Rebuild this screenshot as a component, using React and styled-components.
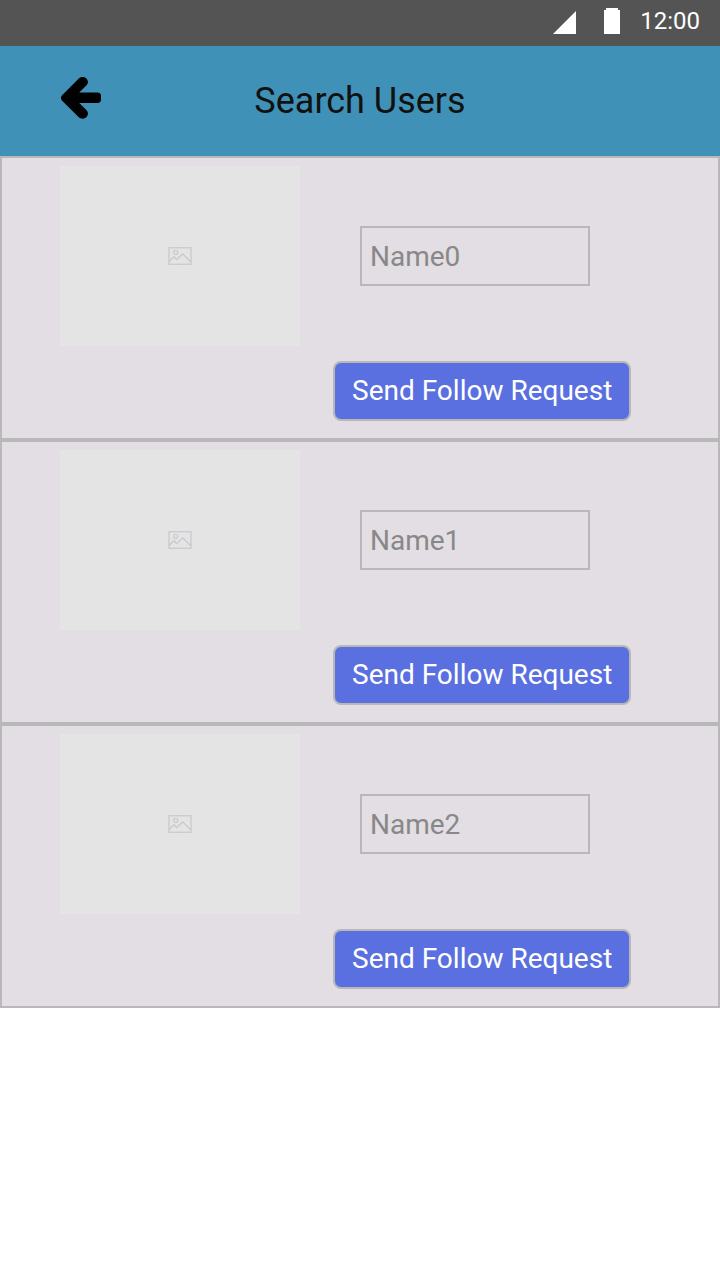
import React from "react";
import styled, { createGlobalStyle } from "styled-components";

const GlobalStyle = createGlobalStyle`
  *, *::before, *::after { box-sizing: border-box; }
  body {
    margin: 0;
    background: #ffffff;
    font-family: Roboto, "Liberation Sans", sans-serif;
  }
  button, input { font: inherit; }
`;

const StatusBar = styled.div`
  display: flex;
  align-items: center;
  justify-content: flex-end;
  height: 46px;
  padding: 0 20px 4px;
  background: #545454;
  color: #ffffff;
  font-size: 24px;
  line-height: 28px;
`;

const StatusIcons = styled.svg`
  display: block;
  width: 68px;
  height: 28px;
  margin-right: 19px;
`;

const Header = styled.header`
  display: grid;
  grid-template-columns: 40px 1fr 40px;
  align-items: center;
  height: 110px;
  padding: 0 60px;
  background: #4091b7;
`;

const BackButton = styled.button`
  display: block;
  width: 42px;
  height: 44px;
  margin-bottom: 6px;
  padding: 0;
  border: 0;
  background: none;
  cursor: pointer;

  svg { display: block; }
`;

const Title = styled.h1`
  margin: 0;
  color: #111111;
  font-size: 36px;
  font-weight: 400;
  line-height: 44px;
  text-align: center;
`;

const UserList = styled.ul`
  margin: 0;
  padding: 0;
  list-style: none;
`;

const UserCard = styled.li`
  display: flex;
  align-items: flex-start;
  padding: 8px 58px 17px;
  border: 2px solid #b8b8b8;
  background: #e2dee3;
`;

const Picture = styled.div`
  display: flex;
  flex: none;
  align-items: center;
  justify-content: center;
  width: 240px;
  height: 180px;
  background: #e4e4e4;
`;

const Details = styled.div`
  display: flex;
  flex: 1;
  flex-direction: column;
  align-items: flex-start;
  gap: 75px;
  padding: 60px 0 0 33px;
`;

const NameInput = styled.input`
  width: 230px;
  height: 60px;
  margin-left: 27px;
  padding: 0 8px;
  border: 2px solid #b8b8b8;
  border-radius: 0;
  background: transparent;
  color: #888888;
  font-size: 28px;
  outline: none;

  &::placeholder { color: #888888; opacity: 1; }
`;

const FollowButton = styled.button`
  height: 60px;
  padding: 0 17px;
  border: 2px solid #b8b8b8;
  border-radius: 8px;
  background: #5a70e0;
  color: #ffffff;
  font-size: 28px;
  line-height: 32px;
  white-space: nowrap;
  cursor: pointer;
`;

const users = ["Name0", "Name1", "Name2"];

function PictureIcon() {
  return (
    <svg width="24" height="18" viewBox="0 0 24 18" fill="none" stroke="#c6c8cc" aria-hidden="true">
      <rect x="1" y="0.75" width="22" height="16.5" strokeWidth="1.2" />
      <circle cx="7.7" cy="5.3" r="2" strokeWidth="1.1" />
      <path d="M1 14.5 6 9.7 8.6 12.6 14.8 6.8 23 15" strokeWidth="1.2" />
    </svg>
  );
}

export default function App() {
  return (
    <>
      <GlobalStyle />
      <StatusBar>
        <StatusIcons viewBox="0 0 68 28" fill="#ffffff" aria-hidden="true">
          <path d="M0 27 23 4V27Z" />
          <path d="M53 1H65V3H67V27H51V3H53Z" />
        </StatusIcons>
        <span>12:00</span>
      </StatusBar>
      <Header>
        <BackButton type="button" aria-label="Back">
          <svg width="42" height="44" viewBox="0 0 42 44" aria-hidden="true">
            <path d="M1.9 19.4 18.3 3C20.8.4 24.1.5 26.3 2.4C28.6 4.4 28.5 7.4 26.3 9.6L19.2 16.6H37.4C40 16.6 41 17.9 41 20.2V23.6C41 25.9 40 27 37.4 27H19.2L26.3 34C28.5 36.3 28.6 39.2 26.3 41.3C24.1 43.3 20.8 43.2 18.3 40.7L1.9 24.4C.6 23 .6 20.8 1.9 19.4Z" />
          </svg>
        </BackButton>
        <Title>Search Users</Title>
      </Header>
      <main>
        <UserList>
          {users.map((name) => (
            <UserCard key={name}>
              <Picture role="img" aria-label={`${name} picture`}>
                <PictureIcon />
              </Picture>
              <Details>
                <NameInput type="text" placeholder={name} aria-label="Name" />
                <FollowButton type="button">Send Follow Request</FollowButton>
              </Details>
            </UserCard>
          ))}
        </UserList>
      </main>
    </>
  );
}
